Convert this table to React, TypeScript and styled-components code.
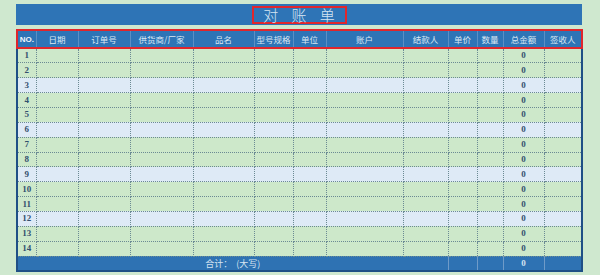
import * as React from 'react'
import styled, { createGlobalStyle } from 'styled-components'

const GlobalStyle = createGlobalStyle`
  html, body {
    margin: 0;
    padding: 0;
    background: #cfe8cf;
  }
`

interface IColumn {
  key: string
  title: string
  width: number
}

const columns: IColumn[] = [
  { key: 'no', title: 'NO.', width: 19 },
  { key: 'date', title: '日期', width: 42 },
  { key: 'order', title: '订单号', width: 52 },
  { key: 'supplier', title: '供货商/厂家', width: 63 },
  { key: 'name', title: '品名', width: 61 },
  { key: 'model', title: '型号规格', width: 39 },
  { key: 'unit', title: '单位', width: 33 },
  { key: 'account', title: '账户', width: 77 },
  { key: 'payer', title: '结款人', width: 45 },
  { key: 'price', title: '单价', width: 29 },
  { key: 'qty', title: '数量', width: 26 },
  { key: 'total', title: '总金额', width: 41 },
  { key: 'signer', title: '签收人', width: 38 }
]

const rows = Array.from({ length: 14 }, (_, i) => i + 1)

const Page = styled.div`
  display: flex;
  flex-direction: column;
  gap: 4px;
  padding: 4px 0 0 16px;
  width: 566px;
  font-family: 'Noto Sans CJK SC', 'Liberation Sans', sans-serif;
`

const TitleBar = styled.div`
  height: 21px;
  background: #2e74b6;
  display: flex;
  align-items: center;
  justify-content: center;
`

const TitleMark = styled.div`
  border: 2px solid #e0262c;
  width: 86px;
  height: 14px;
  display: flex;
  align-items: center;
  justify-content: center;
  color: #d5e4f2;
  font-size: 15px;
  font-weight: 300;
  letter-spacing: 5px;
  padding-left: 5px;
  white-space: pre;
`

const Sheet = styled.table`
  border-collapse: collapse;
  table-layout: fixed;
  width: 566px;
  border-left: 2px solid #1f4f86;
  border-right: 2px solid #1f4f86;
  border-bottom: 2px solid #1f4f86;
`

const HeadCell = styled.th<{ $first?: boolean; $last?: boolean }>`
  height: 16px;
  padding: 0;
  background: #2e74b6;
  color: #dce8f3;
  font-size: 8.5px;
  font-weight: 400;
  text-align: center;
  border-top: 2px solid #e0262c;
  border-bottom: 2px solid #e0262c;
  border-left: ${p => (p.$first ? '2px solid #e0262c' : '1px solid #5c8fc4')};
  border-right: ${p => (p.$last ? '2px solid #e0262c' : '1px solid #5c8fc4')};
  &.no {
    font-family: 'Liberation Sans', sans-serif;
    font-weight: 700;
    font-size: 8px;
    color: #f2f6fa;
  }
`

const BodyRow = styled.tr<{ $alt: boolean }>`
  height: 14.86px;
  background: ${p => (p.$alt ? '#deeaf6' : '#cde8ca')};
`

const Cell = styled.td`
  padding: 0;
  border: 1px dotted #6b8a93;
  text-align: center;
  font-family: 'Liberation Serif', serif;
  font-weight: 700;
  font-size: 9px;
  color: #33506e;
  line-height: 1;
`

const FootRow = styled.tr`
  height: 15px;
  background: #2e72b3;
`

const FootCell = styled.td<{ $bordered?: boolean }>`
  padding: 0;
  border-left: ${p => (p.$bordered ? '1px solid #6f9bc8' : 'none')};
  color: #d6e4f1;
  font-size: 9px;
  text-align: center;
  &.sum {
    font-family: 'Liberation Serif', serif;
    font-weight: 700;
    font-size: 9px;
  }
`

export default function App() {
  return (
    <Page>
      <GlobalStyle />
      <TitleBar>
        <TitleMark>{'对 账 单'}</TitleMark>
      </TitleBar>
      <Sheet>
        <colgroup>
          {columns.map(c => (
            <col key={c.key} style={{ width: c.width }} />
          ))}
        </colgroup>
        <thead>
          <tr>
            {columns.map((c, i) => (
              <HeadCell
                key={c.key}
                className={c.key === 'no' ? 'no' : undefined}
                $first={i === 0}
                $last={i === columns.length - 1}
              >
                {c.title}
              </HeadCell>
            ))}
          </tr>
        </thead>
        <tbody>
          {rows.map(n => (
            <BodyRow key={n} $alt={n % 3 === 0}>
              {columns.map(c => (
                <Cell key={c.key}>
                  {c.key === 'no' ? n : c.key === 'total' ? 0 : ''}
                </Cell>
              ))}
            </BodyRow>
          ))}
          <FootRow>
            <FootCell colSpan={9}>合计：&nbsp;&nbsp;(大写)</FootCell>
            <FootCell $bordered />
            <FootCell $bordered />
            <FootCell $bordered className="sum">0</FootCell>
            <FootCell $bordered />
          </FootRow>
        </tbody>
      </Sheet>
    </Page>
  )
}
